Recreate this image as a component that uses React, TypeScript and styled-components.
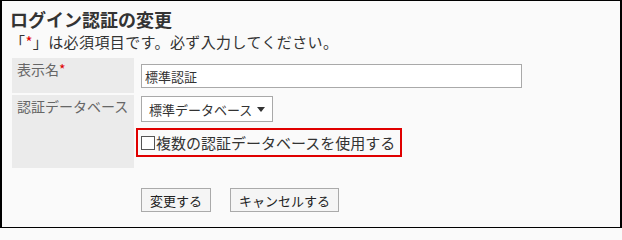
import React from 'react';
import styled, { createGlobalStyle } from 'styled-components';

const GlobalStyle = createGlobalStyle`
  html, body {
    margin: 0;
    padding: 0;
    background: #fafafa;
  }
  body {
    font-family: "Noto Sans CJK JP", "Noto Sans", sans-serif;
    color: #333;
  }
`;

const Frame = styled.div`
  box-sizing: border-box;
  width: 622px;
  height: 228px;
  border: 1px solid #000;
  border-left-width: 2px;
  border-right-width: 2px;
  background: #fafafa;
  padding: 6px 10px 0 8px;
`;

const Title = styled.h1`
  margin: 0;
  font-size: 18px;
  line-height: 24px;
  font-weight: bold;
  color: #333;
`;

const Note = styled.p`
  margin: 1px 0 0;
  font-size: 15px;
  line-height: 20px;
  letter-spacing: 0.4px;
  color: #333;
`;

const Required = styled.span`
  color: #e00000;
`;

const Form = styled.div`
  display: grid;
  grid-template-columns: 122px 1fr;
  column-gap: 2px;
  row-gap: 2px;
  margin: 6px 0 0 2px;
`;

const Label = styled.div`
  background: #ebebeb;
  color: #666;
  font-size: 14px;
  line-height: 20px;
  padding: 1px 5px 0;
  white-space: nowrap;
`;

const Field = styled.div<{ $padTop?: number; $padBottom?: number }>`
  display: flex;
  flex-direction: column;
  align-items: flex-start;
  padding: ${(p) => p.$padTop ?? 6}px 0 ${(p) => p.$padBottom ?? 5}px 0;
`;

const TextInput = styled.input`
  box-sizing: border-box;
  width: 381px;
  height: 24px;
  margin: 0 0 0 5px;
  padding: 0 3px;
  border: 1px solid #a9a9a9;
  background: #fff;
  font-family: inherit;
  font-size: 13px;
  color: #333;
  outline: none;
`;

const SelectBox = styled.div`
  box-sizing: border-box;
  display: flex;
  align-items: center;
  width: 132px;
  height: 26px;
  margin-left: 5px;
  padding: 0 5px 0 7px;
  border: 1px solid #a9a9a9;
  background: #fff;
  font-size: 13px;
  color: #333;
  white-space: nowrap;
  gap: 5px;
`;

const Caret = styled.span`
  flex-shrink: 0;
  width: 0;
  height: 0;
  border-left: 4px solid transparent;
  border-right: 4px solid transparent;
  border-top: 5px solid #333;
  margin-top: 1px;
`;

const Highlight = styled.label`
  box-sizing: border-box;
  display: flex;
  align-items: center;
  height: 29px;
  margin-top: 6px;
  padding: 0 5px 0 3px;
  border: 2px solid #e00000;
  font-size: 15px;
  line-height: 20px;
  color: #333;
  white-space: nowrap;
`;

const Check = styled.input`
  appearance: none;
  box-sizing: border-box;
  width: 14px;
  height: 14px;
  margin: 0 1px 0 0;
  border: 1px solid #555;
  background: #fff;
`;

const Actions = styled.div`
  grid-column: 2;
  display: flex;
  gap: 19px;
  margin-top: 18px;
  padding-left: 5px;
`;

const Button = styled.button`
  box-sizing: border-box;
  height: 24px;
  padding: 0 8px;
  border: 1px solid #aaa;
  background: #f5f5f5;
  font-family: inherit;
  font-size: 13px;
  color: #222;
  cursor: pointer;
`;

export default function App() {
  return (
    <>
      <GlobalStyle />
      <Frame>
        <Title>ログイン認証の変更</Title>
        <Note>
          「<Required>*</Required>」は必須項目です。必ず入力してください。
        </Note>
        <Form>
          <Label>
            表示名<Required>*</Required>
          </Label>
          <Field>
            <TextInput defaultValue="標準認証" />
          </Field>
          <Label>認証データベース</Label>
          <Field $padTop={1} $padBottom={11}>
            <SelectBox>
              標準データベース
              <Caret />
            </SelectBox>
            <Highlight>
              <Check type="checkbox" />
              複数の認証データベースを使用する
            </Highlight>
          </Field>
          <Actions>
            <Button>変更する</Button>
            <Button>キャンセルする</Button>
          </Actions>
        </Form>
      </Frame>
    </>
  );
}
